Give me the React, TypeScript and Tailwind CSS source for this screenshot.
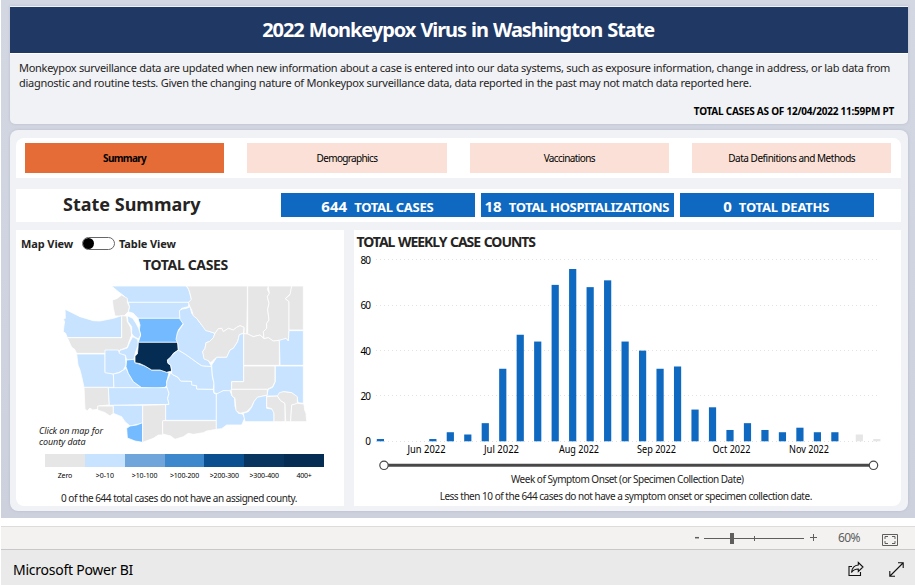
import React from "react";

type Shape = [string, string];

const ZERO = "#e6e6e6";
const LOW = "#c7e3ff";
const MID = "#74baff";
const TOP = "#052c52";

const counties: Shape[] = [
  [LOW, "185,48 408,48 416,58 420,72 424,88 418,97 235,97 222,78 205,65"],
  [LOW, "235,97 418,97 415,110 395,115 390,122 390,145 264,145 250,130 235,125 238,110"],
  [ZERO, "187,90 200,86 215,75 232,85 232,97 238,110 235,125 222,138 195,138 190,115"],
  [MID, "264,145 392,145 400,160 385,180 382,195 384,217 265,217 272,195 268,180 270,165"],
  [LOW, "232,137 248,145 258,160 266,175 272,195 265,207 250,198 245,190 245,170 234,155"],
  [LOW, "45,118 60,125 90,140 130,152 150,153 190,145 215,137 215,203 52,203 47,190 40,185 42,165 44,155 40,148 46,145"],
  [ZERO, "52,203 215,203 215,137 230,138 232,155 242,172 245,195 237,215 232,232 210,240 205,250 80,250 74,238 65,232"],
  [LOW, "248,200 263,208 265,225 257,245 252,268 230,270 226,256 205,252 210,241 232,234 240,215"],
  [LOW, "80,252 165,252 165,307 190,312 192,352 102,352 95,320 90,300 84,285"],
  [LOW, "165,240 205,240 208,250 226,256 228,285 220,300 205,308 190,312 165,308"],
  [LOW, "190,312 208,308 228,295 238,315 250,335 275,353 192,355"],
  [MID, "230,270 252,268 255,278 285,288 305,300 330,300 357,308 350,335 352,345 345,352 320,356 275,353 250,335 235,310 228,290"],
  [TOP, "265,217 383,217 385,240 370,250 363,262 352,270 354,280 362,285 365,303 350,307 330,300 305,300 285,288 270,281 255,278 255,258 262,252 264,235"],
  [ZERO, "102,352 175,352 178,405 145,408 143,418 128,420 120,414 112,422 105,418"],
  [ZERO, "143,408 190,408 190,430 180,438 165,428 143,420"],
  [LOW, "175,353 352,353 357,370 353,385 357,403 178,406"],
  [LOW, "190,406 278,406 278,460 240,468 225,455 215,440 190,430"],
  [MID, "278,458 278,517 255,513 232,504 230,475 240,468 260,465"],
  [ZERO, "278,406 347,404 347,450 338,455 338,495 325,495 310,505 278,517"],
  [ZERO, "338,452 499,452 499,478 470,483 460,488 430,493 415,490 400,500 375,508 362,498 338,492"],
  [LOW, "362,308 370,315 384,322 392,333 425,334 428,345 440,348 440,357 490,358 492,370 499,372 499,451 347,451 347,404 357,403 353,385 357,370 350,350 350,335"],
  [LOW, "385,240 405,252 425,266 440,277 455,287 485,290 487,320 492,340 490,358 440,357 440,347 425,345 425,334 392,333 384,322 365,312 365,300 362,285 354,280 353,270 372,250"],
  [LOW, "388,122 397,117 410,115 420,110 425,130 440,145 455,165 480,185 495,190 490,203 478,215 468,218 465,235 458,245 462,260 475,272 485,290 455,287 440,277 425,266 405,252 385,240 384,222 378,208 382,188 400,162 390,148"],
  [ZERO, "410,48 592,48 592,100 590,195 582,190 582,172 570,167 560,172 550,180 535,175 520,185 515,175 505,176 495,190 480,185 467,182 455,165 440,145 430,138 425,120 420,110 415,98 424,88 420,70 416,58"],
  [ZERO, "593,48 655,48 652,58 658,70 652,80 657,100 653,118 657,150 650,160 650,175 640,185 642,205 630,195 610,200 593,192"],
  [ZERO, "655,48 725,48 722,70 715,78 706,86 717,95 717,180 715,213 708,205 695,210 670,213 655,203 642,206 640,185 650,175 650,160 657,150 653,118 657,100 652,80 658,70"],
  [ZERO, "725,48 760,48 760,180 717,180 717,95 706,86 720,74"],
  [ZERO, "495,190 505,176 515,175 520,185 535,175 550,180 560,172 570,167 582,172 580,190 568,194 563,215 550,235 540,240 530,262 500,262 488,272 482,278 475,272 462,267 458,245 465,235 468,218 478,215 490,203"],
  [LOW, "568,194 581,190 581,335 545,335 545,358 540,365 520,362 505,372 492,368 492,340 487,315 485,285 500,262 530,262 540,240 550,235 563,215"],
  [ZERO, "581,191 593,192 610,200 630,195 642,206 655,203 670,213 688,211 688,286 581,286"],
  [LOW, "688,211 708,205 715,213 717,182 760,182 760,286 690,286"],
  [ZERO, "581,288 675,288 675,335 668,350 652,358 545,358 545,335 581,335"],
  [LOW, "676,288 760,288 760,400 744,398 741,382 725,368 700,365 683,378 650,378 655,358 668,352 676,335"],
  [LOW, "499,372 520,362 540,362 546,378 554,385 555,410 565,430 578,432 584,445 575,465 530,465 515,476 499,478"],
  [ZERO, "543,358 652,358 652,375 622,382 612,395 605,410 590,425 570,430 558,422 555,385 546,378"],
  [LOW, "580,430 595,425 605,412 612,395 622,382 650,376 650,415 672,418 672,455 585,455"],
  [ZERO, "650,380 682,378 692,392 705,400 705,455 672,455 672,430 665,416 650,412"],
  [ZERO, "682,378 688,368 700,365 725,368 742,380 742,402 725,405 722,455 707,455 705,400 692,392"],
  [ZERO, "725,405 742,400 762,402 764,420 768,430 770,455 722,455"],
];

const bars: [number, number][] = [
  [0, 1], [3, 1], [4, 4], [5, 3], [6, 8], [7, 32], [8, 47], [9, 44], [10, 69],
  [11, 76], [12, 68], [13, 71], [14, 44], [15, 40], [16, 32], [17, 33], [18, 14],
  [19, 15], [20, 5], [21, 8], [22, 5], [23, 4], [24, 6], [25, 4], [26, 4],
];
const pending: [number, number][] = [[27.4, 3], [28.4, 1]];

const months: [string, number, number][] = [
  ["Jun 2022", 54.5, 38],
  ["Jul 2022", 131, 35],
  ["Aug 2022", 206, 40],
  ["Sep 2022", 284, 39],
  ["Oct 2022", 359.5, 38],
  ["Nov 2022", 436, 40],
];

const legend: [string, string, string][] = [
  ["Zero", "bg-[#e6e6e6]", "tracking-[-0.1px]"],
  [">0-10", "bg-[#c7e3ff]", "tracking-[0px]"],
  [">10-100", "bg-[#6fa5da]", "tracking-[-0.1px]"],
  [">100-200", "bg-[#3d87cd]", "tracking-[-0.15px]"],
  [">200-300", "bg-[#0a5091]", "tracking-[-0.15px]"],
  [">300-400", "bg-[#07355f]", "tracking-[-0.1px]"],
  ["400+", "bg-[#052c52]", "tracking-[-0.2px]"],
];

function CountyMap() {
  return (
    <svg viewBox="0 0 840 540" className="block h-[180px] w-[280px]">
      {counties.map(([fill, points], i) => (
        <polygon key={i} points={points} fill={fill} stroke="#fff" strokeWidth="2.4" strokeLinejoin="round" />
      ))}
    </svg>
  );
}

function WeeklyChart() {
  const y = (v: number) => 190.3 - v * 2.267;
  return (
    <svg viewBox="0 0 547 225" className="block h-[225px] w-[547px]">
      <g transform="translate(-1 0)">
        {[0, 20, 40, 60, 80].map((v) => (
          <g key={v}>
            <line x1="23" x2="525" y1={Math.floor(y(v)) + 0.5} y2={Math.floor(y(v)) + 0.5} stroke="#e2e2e2" strokeDasharray="1 3" />
            <text x="18" y={y(v) + 4} fontSize="10" textAnchor="end" textLength={v ? 10.5 : 5.5}>{v}</text>
          </g>
        ))}
        {bars.map(([i, v]) => (
          <rect key={i} x={23.8 + i * 17.48} y={y(v)} width="7.2" height={v * 2.267} fill="#0f69c0" />
        ))}
        {pending.map(([i, v]) => (
          <rect key={i} x={23.8 + i * 17.48} y={y(v)} width="7.2" height={v * 2.267} fill="#e6e6e6" />
        ))}
        {months.map(([m, x, w]) => (
          <text key={m} x={x} y="202.3" fontSize="10" textLength={w} lengthAdjust="spacingAndGlyphs">{m}</text>
        ))}
        <line x1="30" x2="521" y1="214.3" y2="214.3" stroke="#484848" strokeWidth="3" />
        <circle cx="31" cy="214.3" r="4.2" fill="#fff" stroke="#484848" strokeWidth="1.2" />
        <circle cx="520.5" cy="214.3" r="4.2" fill="#fff" stroke="#484848" strokeWidth="1.2" />
      </g>
    </svg>
  );
}

function Kpi({ value, label, labelClass }: { value: string; label: string; labelClass: string }) {
  return (
    <div className="flex h-6 w-[193.5px] items-baseline justify-center bg-[#0f69c0] pt-px pr-px font-bold whitespace-nowrap text-white">
      <span className="text-[15px] leading-6 tracking-[0.1px]">{value}</span>
      <span className={"ml-[7px] text-[13px] leading-6 " + labelClass}>{label}</span>
    </div>
  );
}

export default function App() {
  return (
    <div className="h-[585px] w-[915px] overflow-hidden bg-white font-['Noto_Sans',sans-serif] text-[#252423]">
      <div className="ml-px h-[518px] bg-linear-to-b from-[#d2d7e2] to-[#cdd1de] pt-[6px] pl-[8.5px]">
        <header className="h-[118px] w-[898.5px] overflow-hidden rounded-b-[5px] border-t border-[#f1f2f5] bg-[#f1f2f5] shadow-[0_0_3px_#b8bccb]">
          <h1 className="flex h-[47px] items-center justify-center border-b border-white bg-[#203864] pr-px text-[20px] font-bold tracking-[-1.07px] [word-spacing:1px] whitespace-nowrap text-white">
            2022 Monkeypox Virus in Washington State
          </h1>
          <p className="mt-[6px] ml-[9.5px] text-[11px] leading-[15.3px] whitespace-nowrap">
            <span className="tracking-[-0.29px]">Monkeypox surveillance data are updated when new information about a case is entered into our data systems, such as exposure information, change in address, or lab data from</span>
            <br />
            <span className="tracking-[-0.27px]">diagnostic and routine tests. Given the changing nature of Monkeypox surveillance data, data reported in the past may not match data reported here.</span>
          </p>
          <p className="mt-[12px] mr-[14px] text-right text-[10px] leading-4 font-bold tracking-[-0.24px] text-black">TOTAL CASES AS OF 12/04/2022 11:59PM PT</p>
        </header>

        <main className="mt-[6px] h-[381px] w-[898.5px] rounded-[8px] bg-[#f1f2f5] pt-2 pl-[6.5px] shadow-[0_0_3px_#b8bccb]">
          <nav className="flex h-10 w-[885px] gap-[23.2px] rounded-t-[8px] bg-white pt-[5px] pl-[9px] text-[10px] text-black">
            <button className="h-[29.5px] w-[199.2px] bg-[#e66c37] pt-px font-bold tracking-[-0.65px]">Summary</button>
            <button className="h-[29.5px] w-[199.2px] bg-[#fae0d7] pt-px tracking-[-0.65px]">Demographics</button>
            <button className="h-[29.5px] w-[199.2px] bg-[#fae0d7] pt-px tracking-[-0.6px]">Vaccinations</button>
            <button className="h-[29.5px] w-[199.2px] bg-[#fae0d7] pt-px tracking-[-0.48px]">Data Definitions and Methods</button>
          </nav>

          <section className="mt-[10.5px] flex h-[33.5px] w-[885px] bg-white">
            <h2 className="-mt-px w-[265px] pl-[47px] text-[18px] leading-8 font-bold whitespace-nowrap">State Summary</h2>
            <div className="flex gap-[6px] pt-[4.5px]">
              <Kpi value="644" label="TOTAL CASES" labelClass="tracking-[-0.3px]" />
              <Kpi value="18" label="TOTAL HOSPITALIZATIONS" labelClass="tracking-[-0.35px]" />
              <Kpi value="0" label="TOTAL DEATHS" labelClass="tracking-[-0.2px]" />
            </div>
          </section>

          <div className="mt-2 flex gap-[9.5px]">
            <section className="h-[276px] w-[328px] rounded-bl-[8px] bg-white">
              <div className="flex items-center pt-[5px] pl-[5px] text-[11px] leading-4 font-bold whitespace-nowrap">
                <span className="w-[61px] pt-px tracking-[-0.1px]">Map View</span>
                <span className="flex h-[13px] w-[33px] items-center rounded-full border border-[#666] bg-white">
                  <span className="h-[11px] w-[11px] rounded-full bg-black" />
                </span>
                <span className="ml-[4px] pt-px tracking-[-0.12px]">Table View</span>
              </div>
              <h3 className="mt-[4px] pl-[11px] text-center text-[14px] leading-[18px] font-bold tracking-[-0.35px]">TOTAL CASES</h3>
              <div className="-mt-[4px] ml-[34px] h-[155px]">
                <CountyMap />
              </div>
              <p className="ml-[23px] w-[66px] text-[9px] leading-[11px] tracking-[-0.1px] whitespace-nowrap italic">
                Click on map for
                <br />
                county data
              </p>
              <div className="mt-[7px] ml-[29px] flex">
                {legend.map(([label, color, spacing]) => (
                  <div key={label} className="w-[39.85px] text-center text-black">
                    <div className={"h-[13px] " + color} />
                    <div className={"mt-[3.5px] text-[7px] leading-[10px] whitespace-nowrap " + spacing}>{label}</div>
                  </div>
                ))}
              </div>
              <p className="mt-[9.5px] pr-[2px] text-center text-[10px] leading-4 tracking-[-0.46px] whitespace-nowrap">
                0 of the 644 total cases do not have an assigned county.
              </p>
            </section>

            <section className="h-[276px] w-[547.5px] rounded-br-[8px] bg-white">
              <h3 className="pt-[3px] pl-[3px] text-[14px] leading-[18px] font-bold tracking-[-1.04px] [word-spacing:1px]">TOTAL WEEKLY CASE COUNTS</h3>
              <div>
                <WeeklyChart />
              </div>
              <p className="mt-[-5px] text-center text-[10px] leading-[17px] tracking-[-0.48px] whitespace-nowrap">
                Week of Symptom Onset (or Specimen Collection Date)
              </p>
              <p className="pr-[3px] text-center text-[10px] leading-[17px] tracking-[-0.48px] whitespace-nowrap">
                Less then 10 of the 644 cases do not have a symptom onset or specimen collection date.
              </p>
            </section>
          </div>
        </main>
      </div>

      <div className="mt-2 ml-px flex h-[24px] items-center justify-end border-t border-b border-t-[#dcdcdc] border-b-[#c8c8c8] bg-[#f3f2f1] pr-[17px] text-[#605e5c]">
        <svg viewBox="0 0 124 16" className="h-4 w-[124px]" fill="none" stroke="#605e5c">
          <path d="M0 7.7h4" strokeWidth="1.5" />
          <path d="M9 8.5h100" />
          <path d="M37 3v11" strokeWidth="4" />
          <path d="M59.5 6v5M115 7.5h7M118.5 4v7" />
        </svg>
        <span className="ml-[19px] w-[23px] text-[12px] tracking-[-0.6px]">60%</span>
        <svg viewBox="0 0 16 12" className="mt-[4px] ml-[21px] h-3 w-4" fill="none" stroke="#605e5c">
          <path d="M.5.5h15v11H.5z" />
          <path d="M3 5V2.5h3M10 2.5h3V5M13 7v2.5h-3M6 9.5H3V7" />
        </svg>
      </div>
      <footer className="ml-px flex h-[35px] items-center bg-[#eaeaea] pr-[11px] pl-[12px] text-[14px] text-black">
        <span className="mt-[4px] tracking-[-0.25px]">Microsoft Power BI</span>
        <svg viewBox="0 0 16 16" className="mt-[2px] ml-auto h-4 w-4" fill="none" stroke="#111" strokeWidth="1.1">
          <path d="M4 5.5H1v9h11.5v-3.5" />
          <path d="M10.3 1.5 15 6l-4.7 4.5V8C7 8 5 9.2 3.5 11.5 4 7 6.5 4.2 10.3 4z" />
        </svg>
        <svg viewBox="0 0 15 15" className="mt-[3px] ml-[25px] h-[15px] w-[15px]" fill="none" stroke="#111" strokeWidth="1.1">
          <path d="M1 14 14 1M9 .8h5.2V6M.8 9v5.2H6" />
        </svg>
      </footer>
    </div>
  );
}
